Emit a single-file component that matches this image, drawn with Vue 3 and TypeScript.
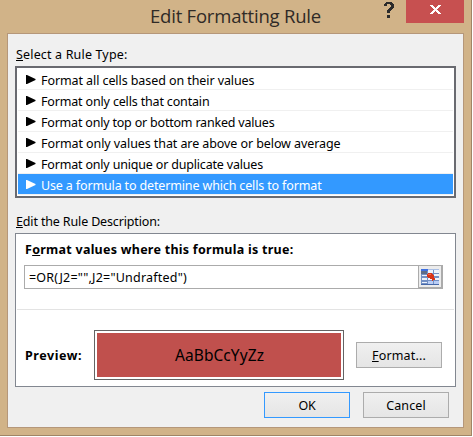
<script setup lang="ts">
import { ref, type Directive } from 'vue'

interface RuleType {
  label: string
  width: number
}

const ruleTypes: RuleType[] = [
  { label: 'Format all cells based on their values', width: 213.5 },
  { label: 'Format only cells that contain', width: 168.5 },
  { label: 'Format only top or bottom ranked values', width: 233.5 },
  { label: 'Format only values that are above or below average', width: 299.5 },
  { label: 'Format only unique or duplicate values', width: 222 },
  { label: 'Use a formula to determine which cells to format', width: 280.5 },
]

const selected = ref(5)
const formula = '=OR(J2="",J2="Undrafted")'

// Spreads a label's letters so that it takes the given width in pixels.
const vFit: Directive<HTMLElement, number> = {
  mounted(el, { value }) {
    const count = (el.textContent ?? '').length
    const natural = el.getBoundingClientRect().width
    el.style.letterSpacing = `${(value - natural) / count}px`
  },
}
</script>

<template>
  <div class="window">
    <header class="titlebar">
      <h1><span v-fit="171" class="fit">Edit Formatting Rule</span></h1>
      <svg class="help" width="10" height="16" viewBox="0 0 10 16" shape-rendering="crispEdges">
        <path fill="#2b2b2b" d="M2 0H8V1H9V2H10V6H9V7H8V8H7V9H6V11H3V8H4V7H5V6H6V5H7V3H6V2H3V4H0V2H1V1H2ZM3 13H6V16H3Z" />
      </svg>
      <button class="close" aria-label="Close">
        <svg width="11" height="9" viewBox="0 0 11 9" shape-rendering="crispEdges">
          <path fill="#fff" d="M0 0H3V1H4V2H5V3H6V2H7V1H8V0H11V1H10V2H9V3H8V4H7V5H8V6H9V7H10V8H11V9H8V8H7V7H6V6H5V7H4V8H3V9H0V8H1V7H2V6H3V5H4V4H3V3H2V2H1V1H0Z" />
        </svg>
      </button>
    </header>

    <main class="client">
      <div class="caption"><span v-fit="111.5" class="fit"><u>S</u>elect a Rule Type:</span></div>
      <ul class="rules">
        <li
          v-for="(rule, i) in ruleTypes"
          :key="rule.label"
          :class="{ selected: i === selected }"
          @click="selected = i"
        >
          <svg width="10" height="9" viewBox="0 0 10 9"><path fill="currentColor" d="M0 0H1L9.5 4V5L1 9H0Z" /></svg>
          <span v-fit="rule.width" class="fit">{{ rule.label }}</span>
        </li>
      </ul>

      <div class="caption second"><span v-fit="144" class="fit"><u>E</u>dit the Rule Description:</span></div>
      <section class="panel">
        <div class="label"><span v-fit="268.5" class="fit">F<u>o</u>rmat values where this formula is true:</span></div>
        <div class="formula">
          <div class="value"><span v-fit="158" class="fit">{{ formula }}</span></div>
          <div class="picker">
            <svg width="18" height="16" viewBox="0 0 18 16" shape-rendering="crispEdges">
              <path fill="#7390c4" d="M0 0H18V16H0Z" />
              <path fill="#3e6fe0" d="M0 0H7V2H0Z" />
              <path fill="#a9bfe6" d="M7 0H18V1H7Z" />
              <path fill="#5c6b88" d="M0 2H6V5H0Z" />
              <path fill="#edf3fc" d="M7 1H12V4H7ZM13 1H18V4H13ZM13 5H18V7H13ZM1 6H6V7H1ZM1 9H6V11H1ZM1 13H6V14H1ZM7 9H12V11H7ZM14 9H18V11H14Z" />
              <path fill="#b9cdf5" d="M7 12H12V15H7ZM13 12H18V15H13Z" />
              <path fill="#4668a8" d="M0 15H18V16H0Z" />
              <path fill="#d83418" d="M7 4H11V5H12V6H13V9H14V11H12V12H11V10H9V9H7V8H6V5H7Z" />
              <path fill="#f26a48" d="M7 5H10V6H7Z" />
            </svg>
          </div>
        </div>
        <hr />
        <div class="preview-row">
          <div class="label preview-label"><span v-fit="57" class="fit">Preview:</span></div>
          <div class="preview"><div class="swatch"><span v-fit="89" class="fit">AaBbCcYyZz</span></div></div>
          <button class="button"><span v-fit="54" class="fit"><u>F</u>ormat...</span></button>
        </div>
      </section>

      <footer class="actions">
        <button class="button primary"><span v-fit="17" class="fit">OK</span></button>
        <button class="button"><span v-fit="39.5" class="fit">Cancel</span></button>
      </footer>
    </main>
  </div>
</template>

<style>
body {
  margin: 0;
  background: #fff;
}
</style>

<style scoped>
* {
  box-sizing: border-box;
}

.window {
  width: 472px;
  height: 436px;
  padding: 0 7px 0 7px;
  border-right: 1px solid #a08566;
  border-bottom: 1px solid #a08566;
  background: #d1b388;
  color: #000;
  font: 12.5px/16px "Noto Sans", "Open Sans", sans-serif;
}

.fit {
  display: inline-block;
  white-space: nowrap;
}

u {
  text-decoration: underline;
  text-decoration-thickness: 1px;
  text-underline-offset: 1px;
  text-decoration-skip-ink: none;
}

.titlebar {
  display: flex;
  height: 33px;
}

h1 {
  width: 231px;
  margin: 0 0 0 143px;
  color: #2f2a26;
  font: 400 18.5px/32px "Open Sans", "Noto Sans", sans-serif;
}

.help {
  margin: 2px 0 0 3px;
}

.close {
  display: flex;
  justify-content: center;
  width: 58px;
  height: 23px;
  margin: 0 0 0 auto;
  padding: 5px 0 0;
  border: 0;
  background: #c75050;
}

.client {
  width: 457px;
  height: 395px;
  padding: 0 7px;
  border: 1px solid #b5977a;
  background: #f0f0f0;
}

.caption {
  height: 32px;
  padding: 13px 0 0 1px;
}

.rules {
  width: 441px;
  height: 132px;
  margin: 0;
  padding: 1px;
  border: 2px solid #696a70;
  background: #fff;
  list-style: none;
}

.rules li {
  display: flex;
  align-items: center;
  gap: 5px;
  height: 21px;
  padding: 4px 0 0 8px;
  border-bottom: 1px solid #f0f0f0;
}

.rules svg {
  margin-top: -3px;
}

.rules .selected {
  background: #3399ff;
  background-clip: padding-box;
  color: #fff;
}

.second {
  height: 35px;
  padding-top: 16px;
}

.panel {
  width: 441px;
  height: 154px;
  padding: 8px 1px 0;
  border: 1px solid #828790;
  background: #fff;
}

.label {
  height: 23px;
  padding-left: 8px;
  font-weight: 700;
}

.formula {
  display: flex;
  width: 419px;
  height: 24px;
  margin-left: 7px;
  border: 1px solid #ababab;
}

.value {
  flex: 1;
  padding: 4px 0 0 4px;
}

.picker {
  display: flex;
  align-items: center;
  justify-content: center;
  width: 25px;
  height: 24px;
  margin: -1px;
  border: 1px solid #ababab;
  border-width: 1px 2px 2px 1px;
  background: #ececec;
}

hr {
  height: 1px;
  margin: 20px 0;
  border: 0;
  background: #e3e3e3;
}

.preview-row {
  display: flex;
  height: 50px;
}

.preview-label {
  width: 77px;
  padding-top: 18px;
}

.preview {
  width: 250px;
  height: 50px;
  padding: 2px;
  border: 1px solid #646464;
}

.swatch {
  display: flex;
  align-items: center;
  justify-content: center;
  height: 44px;
  padding-left: 1px;
  background: #c0504d;
  font-size: 15.5px;
}

.button {
  display: flex;
  align-items: center;
  justify-content: center;
  width: 86px;
  height: 26px;
  padding: 1px 0 0;
  border: 1px solid #acacac;
  background: linear-gradient(#f0f0f0, #e5e5e5);
  color: #000;
  font: inherit;
}

.preview-row .button {
  margin: 12px 0 0 12px;
}

.primary {
  border-color: #3399ff;
}

.actions {
  display: flex;
  justify-content: flex-end;
  gap: 13px;
  padding: 5px 7px 0 0;
}
</style>
